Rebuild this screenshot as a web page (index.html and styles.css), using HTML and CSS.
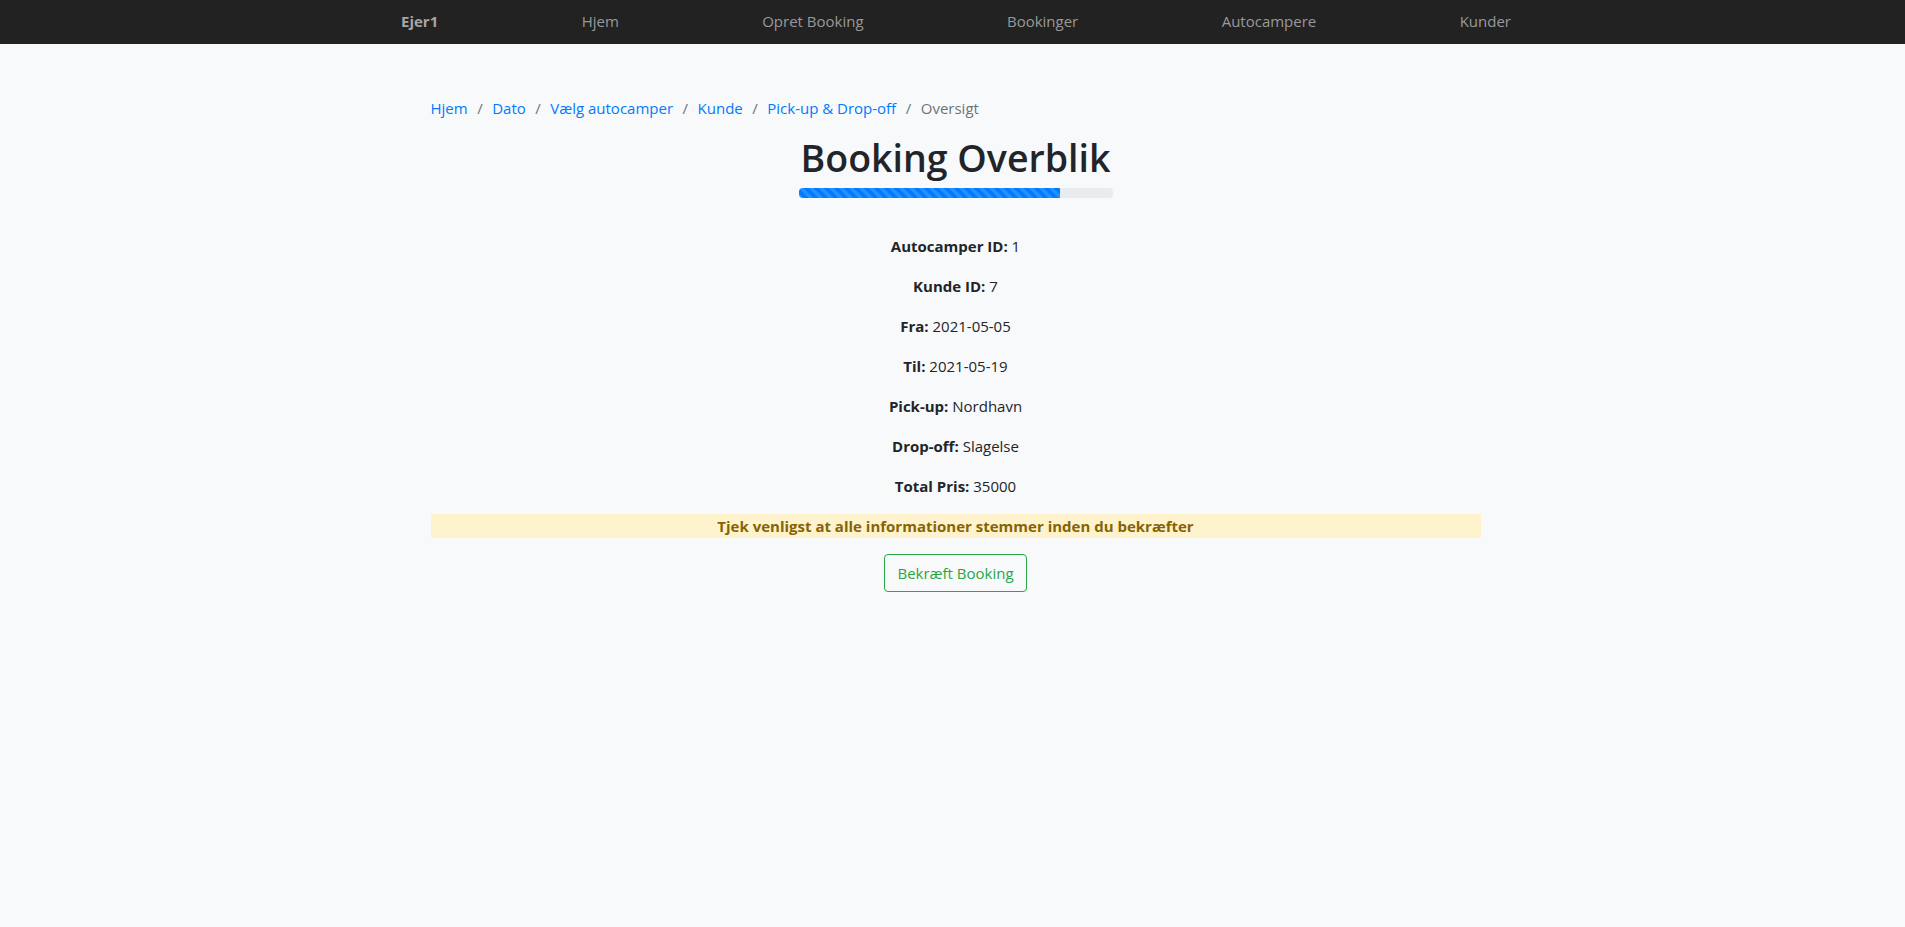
FILE: index.html
```html
<!DOCTYPE html>
<html lang="da">
<head>
<meta charset="utf-8">
<title>Booking Overblik</title>
<link rel="stylesheet" href="styles.css">
</head>
<body>
<nav class="navbar">
  <div class="nav-inner">
    <a class="nav-brand" href="#">Ejer1</a>
    <a class="nav-link" href="#">Hjem</a>
    <a class="nav-link" href="#">Opret Booking</a>
    <a class="nav-link" href="#">Bookinger</a>
    <a class="nav-link" href="#">Autocampere</a>
    <a class="nav-link" href="#">Kunder</a>
  </div>
</nav>
<main class="main">
  <div class="container">
    <ol class="breadcrumb">
      <li class="crumb"><a href="#">Hjem</a></li>
      <li class="crumb"><span class="sep">/</span><a href="#">Dato</a></li>
      <li class="crumb"><span class="sep">/</span><a href="#">Vælg autocamper</a></li>
      <li class="crumb"><span class="sep">/</span><a href="#">Kunde</a></li>
      <li class="crumb"><span class="sep">/</span><a href="#">Pick-up &amp; Drop-off</a></li>
      <li class="crumb active"><span class="sep">/</span>Oversigt</li>
    </ol>
    <div class="header">
      <h1 class="title">Booking Overblik</h1>
      <div class="progress"><div class="progress-bar" style="width: 83.33%"></div></div>
    </div>
    <div class="details">
      <p class="row"><strong>Autocamper ID:</strong> 1</p>
      <p class="row"><strong>Kunde ID:</strong> 7</p>
      <p class="row"><strong>Fra:</strong> 2021-05-05</p>
      <p class="row"><strong>Til:</strong> 2021-05-19</p>
      <p class="row"><strong>Pick-up:</strong> Nordhavn</p>
      <p class="row"><strong>Drop-off:</strong> Slagelse</p>
      <p class="row"><strong>Total Pris:</strong> 35000</p>
      <p class="warning">Tjek venligst at alle informationer stemmer inden du bekræfter</p>
      <button class="btn-confirm" type="button">Bekræft Booking</button>
    </div>
  </div>
</main>
</body>
</html>
```
FILE: styles.css
```css
* { box-sizing: border-box; }
html, body { margin: 0; padding: 0; }
body {
  background: #f8f9fa;
  color: #212529;
  font-family: "Open Sans", "Noto Sans", sans-serif;
  font-size: 15px;
  line-height: 24px;
}
a { text-decoration: none; }

.navbar {
  background: #222222;
  height: 44px;
}
.nav-inner {
  width: 1133px;
  height: 44px;
  margin: 0 auto;
  padding: 0 0 2px 7px;
  display: flex;
  justify-content: space-between;
  align-items: center;
}
.nav-brand, .nav-link {
  color: #999999;
  padding: 0 8px;
}
.nav-brand { font-weight: 700; color: #a6a6a6; }

.main { padding-left: 6px; }
.container {
  width: 1050px;
  margin: 0 auto;
  padding-top: 52px;
  padding-bottom: 40px;
}

.breadcrumb {
  display: flex;
  list-style: none;
  margin: 0;
  padding: 0;
}
.crumb a { color: #007bff; }
.crumb.active { color: #6c757d; }
.sep { color: #6c757d; padding: 0 9.5px; }

.header {
  margin-top: 14px;
  text-align: center;
}
.title {
  margin: 0 0 6px;
  font-size: 37.5px;
  line-height: 48px;
  font-weight: 600;
}
.progress {
  width: 314px;
  height: 10px;
  margin: 0 auto;
  background: #e9ecef;
  border-radius: 4px;
  overflow: hidden;
}
.progress-bar {
  height: 100%;
  background-color: #007bff;
  background-image: linear-gradient(45deg, rgba(255,255,255,.15) 25%, transparent 25%, transparent 50%, rgba(255,255,255,.15) 50%, rgba(255,255,255,.15) 75%, transparent 75%, transparent);
  background-size: 10px 10px;
}

.details {
  margin-top: 36px;
  text-align: center;
}
.row { margin: 0 0 16px; }
.row strong { font-weight: 700; }
.warning {
  margin: 0 0 16px;
  background: #fff3cd;
  color: #856404;
  font-weight: 700;
}
.btn-confirm {
  font-family: inherit;
  font-size: 15px;
  line-height: 24px;
  padding: 6px 12px;
  color: #28a745;
  background: transparent;
  border: 1px solid #28a745;
  border-radius: 4px;
  cursor: pointer;
}
```
